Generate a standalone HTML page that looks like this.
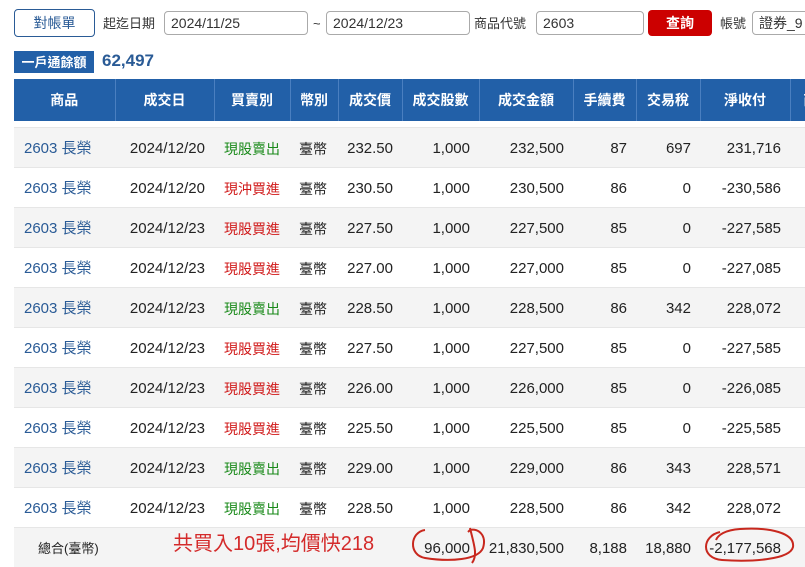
<!DOCTYPE html>
<html><head><meta charset="utf-8"><style>
body{margin:0;width:805px;height:565px;overflow:hidden;background:#fff;font-family:"Liberation Sans","Noto Sans CJK TC",sans-serif;color:#222;position:relative}
.a{position:absolute}
.inp{position:absolute;border:1px solid #aaa;border-radius:4px;height:24px;box-sizing:border-box;font-size:14px;line-height:22px;padding-left:6px;color:#333;background:#fff}
.lbl{position:absolute;font-size:13px;color:#333;top:15px;line-height:18px}
table{position:absolute;left:14px;top:79px;width:816px;border-collapse:collapse;table-layout:fixed;font-size:15px}
th{background:#2260a8;color:#fff;font-weight:bold;height:42px;border-left:1px solid #4a7fc0;font-size:14px;padding:0;line-height:18px}
tr.r{height:40px}
td{padding:3px 9px 0;text-align:right;white-space:nowrap;overflow:hidden;border-top:1px solid #e6e6e6;line-height:20px;vertical-align:middle}
tr.g td{background:#f4f4f4}
td.c{text-align:left;color:#2a5b96;padding-left:10px}
td.t{text-align:center;padding:3px 0 0;font-size:14px}
td.b{color:#d01818}td.s{color:#1a8a1a}
td.m{text-align:left;font-size:14px;padding-top:3px}
</style></head><body>
<div class="a" style="left:14px;top:9px;width:79px;height:26px;border:1px solid #2a5b96;border-radius:4px;color:#2a5b96;font-size:14px;text-align:center;line-height:26px">對帳單</div>
<div class="lbl" style="left:103px">起迄日期</div>
<div class="inp" style="left:164px;top:11px;width:144px">2024/11/25</div>
<div class="lbl" style="left:313px">~</div>
<div class="inp" style="left:326px;top:11px;width:144px">2024/12/23</div>
<div class="lbl" style="left:474px">商品代號</div>
<div class="inp" style="left:536px;top:11px;width:108px">2603</div>
<div class="a" style="left:648px;top:10px;width:64px;height:26px;background:#cc0000;border-radius:4px;color:#fff;font-size:14px;font-weight:bold;text-align:center;line-height:27px">查詢</div>
<div class="lbl" style="left:720px">帳號</div>
<div class="inp" style="left:752px;top:11px;width:70px">證券_9</div>
<div class="a" style="left:14px;top:51px;width:80px;height:22px;background:#2260a8;color:#fff;font-size:13px;font-weight:bold;text-align:center;line-height:23px">一戶通餘額</div>
<div class="a" style="left:102px;top:51px;font-size:17px;font-weight:bold;color:#2a5b96">62,497</div>
<table>
<colgroup><col style="width:101px"><col style="width:99px"><col style="width:76px"><col style="width:48px"><col style="width:64px"><col style="width:77px"><col style="width:94px"><col style="width:63px"><col style="width:64px"><col style="width:90px"><col style="width:40px"></colgroup>
<tr><th style="border-left:none">商品</th><th>成交日</th><th>買賣別</th><th>幣別</th><th>成交價</th><th>成交股數</th><th>成交金額</th><th>手續費</th><th>交易稅</th><th>淨收付</th><th>商</th></tr>
<tr style="height:6px"><td colspan="11" style="border:none;padding:0;line-height:0"></td></tr>
<tr class="r g"><td class="c">2603 長榮</td><td>2024/12/20</td><td class="t s">現股賣出</td><td class="m">臺幣</td><td>232.50</td><td>1,000</td><td>232,500</td><td>87</td><td>697</td><td>231,716</td><td></td></tr>
<tr class="r"><td class="c">2603 長榮</td><td>2024/12/20</td><td class="t b">現沖買進</td><td class="m">臺幣</td><td>230.50</td><td>1,000</td><td>230,500</td><td>86</td><td>0</td><td>-230,586</td><td></td></tr>
<tr class="r g"><td class="c">2603 長榮</td><td>2024/12/23</td><td class="t b">現股買進</td><td class="m">臺幣</td><td>227.50</td><td>1,000</td><td>227,500</td><td>85</td><td>0</td><td>-227,585</td><td></td></tr>
<tr class="r"><td class="c">2603 長榮</td><td>2024/12/23</td><td class="t b">現股買進</td><td class="m">臺幣</td><td>227.00</td><td>1,000</td><td>227,000</td><td>85</td><td>0</td><td>-227,085</td><td></td></tr>
<tr class="r g"><td class="c">2603 長榮</td><td>2024/12/23</td><td class="t s">現股賣出</td><td class="m">臺幣</td><td>228.50</td><td>1,000</td><td>228,500</td><td>86</td><td>342</td><td>228,072</td><td></td></tr>
<tr class="r"><td class="c">2603 長榮</td><td>2024/12/23</td><td class="t b">現股買進</td><td class="m">臺幣</td><td>227.50</td><td>1,000</td><td>227,500</td><td>85</td><td>0</td><td>-227,585</td><td></td></tr>
<tr class="r g"><td class="c">2603 長榮</td><td>2024/12/23</td><td class="t b">現股買進</td><td class="m">臺幣</td><td>226.00</td><td>1,000</td><td>226,000</td><td>85</td><td>0</td><td>-226,085</td><td></td></tr>
<tr class="r"><td class="c">2603 長榮</td><td>2024/12/23</td><td class="t b">現股買進</td><td class="m">臺幣</td><td>225.50</td><td>1,000</td><td>225,500</td><td>85</td><td>0</td><td>-225,585</td><td></td></tr>
<tr class="r g"><td class="c">2603 長榮</td><td>2024/12/23</td><td class="t s">現股賣出</td><td class="m">臺幣</td><td>229.00</td><td>1,000</td><td>229,000</td><td>86</td><td>343</td><td>228,571</td><td></td></tr>
<tr class="r"><td class="c">2603 長榮</td><td>2024/12/23</td><td class="t s">現股賣出</td><td class="m">臺幣</td><td>228.50</td><td>1,000</td><td>228,500</td><td>86</td><td>342</td><td>228,072</td><td></td></tr>
<tr class="r g"><td class="c" style="color:#222;font-size:13px;padding-left:24px" colspan="2">總合(臺幣)</td><td colspan="3"></td><td>96,000</td><td>21,830,500</td><td>8,188</td><td>18,880</td><td>-2,177,568</td><td></td></tr>
</table>
<div class="a" style="left:173px;top:531px;font-size:20px;color:#d42a2a;line-height:26px">共買入10張,均價快218</div>
<svg class="a" style="left:0;top:0" width="805" height="565"><g fill="none" stroke="#c8281e" stroke-width="2">
<path d="M425 530 C410 532 408 555 425 558 C450 562 478 560 483 548 C487 535 478 528 470 530 L468 532 M470 528 C474 545 478 555 472 563"/>
<path d="M720 532 C702 536 700 558 722 560 C750 562 790 560 793 547 C795 533 770 527 740 529 C725 530 718 535 716 540"/>
</g></svg>
</body></html>
